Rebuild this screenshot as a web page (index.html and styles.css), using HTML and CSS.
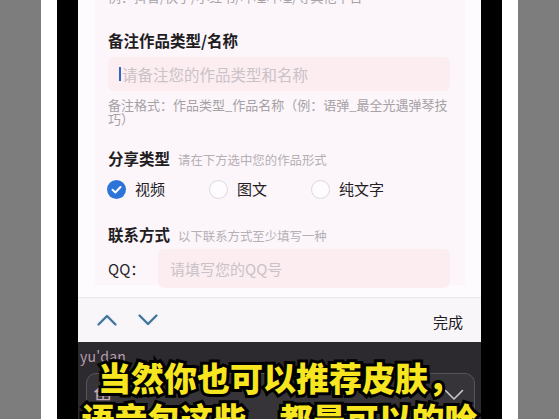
FILE: index.html
```html
<!DOCTYPE html>
<html lang="zh">
<head>
<meta charset="utf-8">
<title>分享作品</title>
<link rel="stylesheet" href="styles.css">
</head>
<body>
<div class="frame">
  <div class="side-grey"></div>
  <div class="side-white"></div>
  <div class="side-black"></div>
  <div class="phone">
    <div class="form">
      <div class="card">
        <div class="cut">例：抖音/快手/小红书/哔哩哔哩/等其他平台</div>
        <div class="heading h-first">备注作品类型/名称</div>
        <div class="input input-name"><span class="caret"></span><span class="ph">请备注您的作品类型和名称</span></div>
        <div class="help">备注格式：作品类型_作品名称（例：语弹_最全光遇弹琴技巧）</div>
        <div class="section s-share"><span class="heading">分享类型</span><span class="hint">请在下方选中您的作品形式</span></div>
        <div class="radios">
          <div class="radio"><span class="dot checked"><svg viewBox="0 0 18 18" width="18" height="18"><circle cx="9" cy="9" r="9" fill="#2d74d9"/><path d="M5.2 9.3 L7.9 11.8 L12.8 6.6" fill="none" stroke="#fff" stroke-width="1.9" stroke-linecap="round" stroke-linejoin="round"/></svg></span><span class="rl">视频</span></div>
          <div class="radio"><span class="dot"></span><span class="rl">图文</span></div>
          <div class="radio"><span class="dot"></span><span class="rl">纯文字</span></div>
        </div>
        <div class="section s-contact"><span class="heading">联系方式</span><span class="hint">以下联系方式至少填写一种</span></div>
        <div class="qq-row"><span class="qq-label">QQ：</span><div class="input input-qq"><span class="ph">请填写您的QQ号</span></div></div>
      </div>
    </div>
    <div class="toolbar">
      <svg class="chev" viewBox="0 0 20 12" width="20" height="12"><path d="M1.5 10.5 L10 2 L18.5 10.5" fill="none" stroke="#3f6f95" stroke-width="2" stroke-linecap="round" stroke-linejoin="round"/></svg>
      <svg class="chev" viewBox="0 0 20 12" width="20" height="12"><path d="M1.5 1.5 L10 10 L18.5 1.5" fill="none" stroke="#3f6f95" stroke-width="2" stroke-linecap="round" stroke-linejoin="round"/></svg>
      <span class="done">完成</span>
    </div>
    <div class="keyboard">
      <div class="pinyin">yu'dan</div>
      <div class="candidates">
        <span class="cand">鱼</span>
        <svg class="cand-chev" viewBox="0 0 20 12" width="20" height="12"><path d="M1.5 1.5 L10 10 L18.5 1.5" fill="none" stroke="#c9c7ca" stroke-width="1.6" stroke-linecap="round" stroke-linejoin="round"/></svg>
      </div>
    </div>
    <div class="subtitle">
      <div class="sub-line">当然你也可以推荐皮肤，</div>
      <div class="sub-line">语音包这些，都是可以的哈</div>
    </div>
  </div>
  <div class="side-black"></div>
  <div class="side-white"></div>
  <div class="side-grey"></div>
</div>
</body>
</html>
```
FILE: styles.css
```css
* { box-sizing: border-box; }
html, body { margin: 0; padding: 0; }
body {
  width: 559px;
  height: 419px;
  overflow: hidden;
  font-family: "Noto Sans CJK SC", "Noto Sans", sans-serif;
  background: #7c7c7c;
}
.frame {
  display: flex;
  width: 559px;
  height: 419px;
}
.side-grey { width: 41px; background: #7d7d7d; flex: none; }
.side-white { width: 16px; background: #ffffff; flex: none; }
.side-black { width: 21px; background: #000000; flex: none; }
.phone {
  position: relative;
  width: 403px;
  flex: none;
  display: flex;
  flex-direction: column;
  overflow: hidden;
}
.form {
  height: 298px;
  flex: none;
  background: #fefbfe;
  padding: 0 16px 0 17px;
  border-bottom: 1px solid #ebe6ea;
  overflow: hidden;
}
.card {
  height: 100%;
  background: #fcf6fb;
  padding: 0 0 0 13px;
}
.cut {
  margin-top: -12px;
  font-size: 13px;
  line-height: 18px;
  color: #a7a2a6;
  white-space: nowrap;
}
.heading {
  font-size: 15.5px;
  font-weight: 700;
  color: #1f1d1f;
  line-height: 22px;
}
.h-first { margin-top: 23px; }
.input {
  width: 342px;
  background: #fcedf1;
  border-radius: 6px;
  display: flex;
  align-items: center;
}
.input-name {
  margin-top: 6px;
  height: 34px;
  padding-left: 11px;
}
.caret {
  width: 2px;
  height: 14px;
  background: #2f63c9;
  margin-right: 1px;
}
.ph {
  font-size: 15.5px;
  color: #cac2c7;
  line-height: 20px;
}
.help {
  margin-top: 7px;
  width: 342px;
  font-size: 13px;
  line-height: 14px;
  color: #a6a1a5;
}
.section {
  display: flex;
  align-items: baseline;
  gap: 8px;
  line-height: 22px;
}
.s-share { margin-top: 21px; }
.s-contact { margin-top: 23px; }
.hint {
  font-size: 12.4px;
  color: #b4afb3;
}
.radios {
  margin-top: 7px;
  margin-left: -1px;
  display: flex;
  height: 22px;
  align-items: center;
}
.radio {
  width: 102px;
  display: flex;
  align-items: center;
  gap: 9px;
}
.dot {
  width: 19px;
  height: 19px;
  border-radius: 50%;
  border: 1px solid #dcd8db;
  background: #fefcfe;
  display: flex;
  align-items: center;
  justify-content: center;
}
.dot.checked { border: none; }
.dot svg { display: block; width: 19px; height: 19px; }
.rl {
  font-size: 15px;
  color: #232123;
  line-height: 20px;
}
.qq-row {
  margin-top: 2px;
  display: flex;
  align-items: center;
}
.qq-label {
  width: 50px;
  font-size: 15px;
  color: #262426;
}
.input-qq {
  width: 292px;
  height: 39px;
  padding-left: 12px;
}
.input-qq .ph { font-size: 15px; }
.toolbar {
  height: 44px;
  flex: none;
  background: #f9f6f9;
  display: flex;
  align-items: center;
  padding: 0 18px 0 19px;
  gap: 21px;
}
.chev { display: block; filter: drop-shadow(0 0 1px #bfe0f5); }
.done {
  margin-left: auto;
  font-size: 15px;
  color: #1e1c1e;
  padding-top: 3px;
}
.keyboard {
  flex: 1;
  background: #2c2a2e;
  padding: 5px 0 0 2px;
}
.pinyin {
  font-size: 14px;
  line-height: 18px;
  color: #b99cae;
  letter-spacing: 0.2px;
}
.candidates {
  margin: 8px 6px 0 6px;
  height: 48px;
  border: 1px solid #58555a;
  border-radius: 10px;
  background: #363438;
  display: flex;
  align-items: flex-start;
  padding: 9px 10px 0 6px;
}
.cand {
  font-size: 20px;
  color: #c8a9bb;
  line-height: 24px;
}
.cand-chev { margin-left: auto; margin-top: 6px; }
.subtitle {
  position: absolute;
  left: 0;
  right: 0;
  top: 357px;
  text-align: center;
  pointer-events: none;
}
.sub-line {
  font-size: 33px;
  line-height: 41px;
  font-weight: 900;
  color: #f7e51f;
  white-space: nowrap;
  letter-spacing: 0px;
  -webkit-text-stroke: 6px #000;
  paint-order: stroke fill;
}
```
